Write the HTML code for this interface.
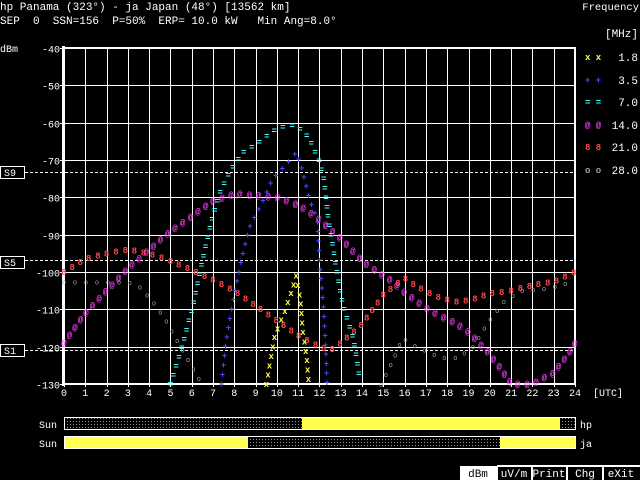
<!DOCTYPE html>
<html><head><meta charset="utf-8"><style>
html,body{margin:0;padding:0;background:#000;width:640px;height:480px;overflow:hidden}
svg{display:block}
text{font-family:"Liberation Mono","DejaVu Sans Mono",monospace;fill:#fff}
</style></head><body>
<svg id="s" width="640" height="480" xmlns="http://www.w3.org/2000/svg">
<defs>
<pattern id="dots" width="3" height="3" patternUnits="userSpaceOnUse">
<rect width="3" height="3" fill="#000"/><rect x="1" y="1" width="1" height="1" fill="#999"/>
</pattern>
</defs>
<text x="0" y="10" font-size="11">hp Panama (323°) - ja Japan (48°) [13562 km]</text>
<text x="0" y="24" font-size="11" xml:space="preserve">SEP  0  SSN=156  P=50%  ERP= 10.0 kW   Min Ang=8.0°</text>
<text x="639" y="10" font-size="10.5" text-anchor="end">Frequency</text>
<text x="638" y="37" font-size="11" text-anchor="end">[MHz]</text>
<text x="0" y="52" font-size="10">dBm</text>
<g id="grid"></g>
<g id="marks"></g>
<g font-size="11">
<text x="638" y="61" text-anchor="end">1.8</text>
<text x="638" y="84" text-anchor="end">3.5</text>
<text x="638" y="106" text-anchor="end">7.0</text>
<text x="638" y="129" text-anchor="end">14.0</text>
<text x="638" y="151" text-anchor="end">21.0</text>
<text x="638" y="174" text-anchor="end">28.0</text>
</g>
<g font-size="9" font-weight="bold">
<text x="585" y="60" style="fill:#ffff40">x x</text>
<text x="585" y="83" style="fill:#4848ff">+ +</text>
<text x="585" y="105" style="fill:#40ffff">= =</text>
<text x="585" y="128" style="fill:#ff40ff">@ @</text>
<text x="585" y="150" style="fill:#ff4848">8 8</text>
<text x="585" y="173" style="fill:#a0a0a0">o o</text>
</g>
<g stroke="#fff" fill="#000" stroke-width="1">
<rect x="0.5" y="166.5" width="24" height="12"/>
<rect x="0.5" y="256.5" width="24" height="12"/>
<rect x="0.5" y="344.5" width="24" height="12"/>
</g>
<g font-size="10">
<text x="4" y="176">S9</text><text x="4" y="266">S5</text><text x="4" y="354">S1</text>
</g>
<text x="608" y="396" font-size="10" text-anchor="middle">[UTC]</text>
<rect x="64.5" y="417.5" width="511" height="12" fill="url(#dots)" stroke="#fff"/>
<rect x="302" y="418" width="258" height="11" fill="#ffff50"/>
<rect x="64.5" y="436.5" width="511" height="12" fill="url(#dots)" stroke="#fff"/>
<rect x="65" y="437" width="183" height="11" fill="#ffff50"/>
<rect x="500" y="437" width="75" height="11" fill="#ffff50"/>
<text x="39" y="428" font-size="10">Sun</text><text x="580" y="428" font-size="10">hp</text>
<text x="39" y="447" font-size="10">Sun</text><text x="580" y="447" font-size="10">ja</text>
<rect x="460" y="466" width="37" height="14" fill="#fff"/>
<g stroke="#fff" stroke-width="2"><line x1="497" y1="466" x2="497" y2="480"/><line x1="532" y1="466" x2="532" y2="480"/><line x1="567" y1="466" x2="567" y2="480"/><line x1="603" y1="466" x2="603" y2="480"/><line x1="497" y1="466" x2="640" y2="466"/></g>
<g font-size="11">
<text x="478" y="477" text-anchor="middle" style="fill:#000">dBm</text>
<text x="514" y="477" text-anchor="middle">uV/m</text>
<text x="549" y="477" text-anchor="middle">Print</text>
<text x="585" y="477" text-anchor="middle">Chg</text>
<text x="621" y="477" text-anchor="middle">eXit</text>
</g>
</svg>
<script>
(function(){
var NS="http://www.w3.org/2000/svg";
var g=document.getElementById('grid'),m=document.getElementById('marks');
function X(h){return 64+h*21.29;} function Y(d){return 48+(-40-d)*3.7333;}
function el(p,t,a,txt){var e=document.createElementNS(NS,t);for(var k in a)e.setAttribute(k,a[k]);if(txt!=null)e.textContent=txt;p.appendChild(e);return e;}
for(var h=0;h<=24;h++){var x=Math.round(X(h))+0.5;el(g,'line',{x1:x,y1:48,x2:x,y2:387,stroke:'#fff','stroke-width':1});
 el(g,'text',{x:X(h),y:396,'font-size':10,'text-anchor':'middle'},h);}
for(var d=-40;d>=-130;d-=10){var y=Math.round(Y(d))+0.5;el(g,'line',{x1:60,y1:y,x2:575,y2:y,stroke:'#fff','stroke-width':1});
 el(g,'text',{x:60,y:y+4,'font-size':10,'text-anchor':'end'},'-'+(-d));}
el(g,'rect',{x:64,y:48,width:511,height:336,fill:'none',stroke:'#fff','stroke-width':2});
el(g,'line',{x1:63.5,y1:46,x2:63.5,y2:386,stroke:'#fff','stroke-width':3});
[172,260,350].forEach(function(y){el(g,'line',{x1:25,y1:y+.5,x2:575,y2:y+.5,stroke:'#fff','stroke-dasharray':'3,2'});});
el(g,'line',{x1:341.5,y1:48,x2:341.5,y2:384,stroke:'#fff','stroke-dasharray':'3,2'});
var S=[
 ['@','#ff40ff',[[0,-119],[1,-111],[2,-105],[3,-99],[4,-94],[5,-89],[6,-85],[7,-81],[8,-79],[9,-79.5],[10,-80],[11,-82],[12,-86],[13,-91],[14,-97],[14.6,-99.5],[15.3,-102],[15.9,-105],[16.6,-108],[17.3,-110.7],[18.3,-113.4],[19,-116],[19.9,-121.4],[20.5,-125.7],[21,-130],[22,-130],[23,-127],[23.8,-121],[24,-119]]],
 ['8','#ff4848',[[0,-100],[1,-96.5],[2,-95],[3,-94],[4,-95],[5,-97],[6,-99.5],[7,-102],[8,-105],[9,-109],[10,-113],[11,-117],[12,-120],[12.5,-121],[13,-119],[14,-114],[15,-106],[16,-101.6],[16.6,-104],[17.7,-107],[18.5,-108],[19.4,-107],[20,-105.7],[21,-105],[22,-103.5],[23,-102.6],[24,-100]]],
 ['=','#40ffff',[[5,-130],[5.6,-119],[6.1,-108],[6.5,-97],[6.9,-87],[7.3,-79],[7.8,-73],[8.4,-68],[9.1,-65.5],[10,-61.5],[10.9,-60.6],[11.5,-64],[12,-70.5],[12.2,-75],[12.4,-85],[12.8,-99.5],[13.1,-109],[13.6,-118],[13.9,-129]]],
 ['+','#4848ff',[[7.4,-130],[7.6,-119],[7.9,-109],[8.3,-97.6],[8.7,-88],[9.3,-81.5],[9.8,-75],[10.3,-72],[10.9,-68],[11.2,-72.7],[11.5,-80],[11.9,-86],[12,-97],[12.2,-110],[12.3,-121],[12.35,-130]]],
 ['x','#ffff40',[[9.5,-130],[9.9,-117],[10.4,-110],[10.7,-105],[10.9,-101],[11.1,-107],[11.2,-115],[11.4,-123],[11.5,-130]]],
 ['o','#a0a0a0',[[0,-102.5],[3,-102.5],[3.6,-104],[4.2,-108],[4.7,-112],[5.2,-117],[5.7,-122],[6.1,-126],[6.5,-130]]],
 ['o','#a0a0a0',[[14.9,-130],[15.4,-124],[15.9,-117.5],[16.6,-120],[17.7,-122.8],[18.5,-122.8],[19.2,-120],[19.9,-113.4],[20.7,-107.5],[21.5,-104.8],[22.5,-104.3],[23.3,-103.5],[24,-102]]]
];
S.forEach(function(s){var pts=s[2].map(function(p){return [X(p[0]),Y(p[1])];});
 var step=(s[0]=='o')?11:9.5,acc=step;
 for(var i=0;i<pts.length-1;i++){var a=pts[i],b=pts[i+1],L=Math.hypot(b[0]-a[0],b[1]-a[1]);
  for(var t=0;t<L;t+=0.5){acc+=0.5;if(acc>=step){acc=0;var px=a[0]+(b[0]-a[0])*t/L,py=a[1]+(b[1]-a[1])*t/L;
   el(m,'text',{x:px.toFixed(1),y:(py+3).toFixed(1),'font-size':(s[0]=='o'?7:9),'font-weight':(s[0]=='o'?'normal':'bold'),'text-anchor':'middle',style:'fill:'+s[1]},s[0]);}}}
});
})();
</script>
</body></html>
